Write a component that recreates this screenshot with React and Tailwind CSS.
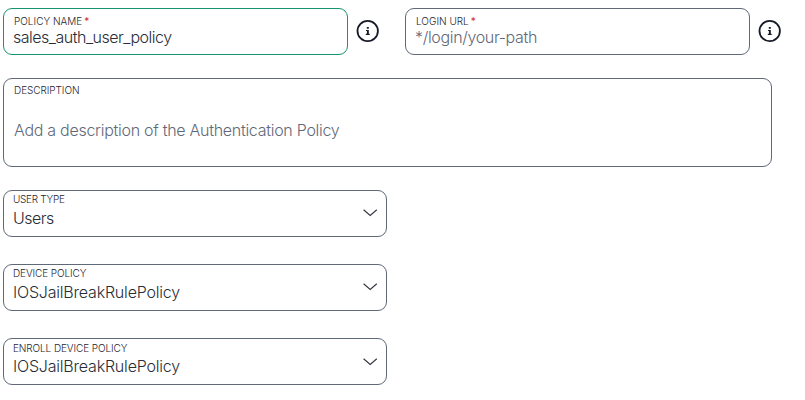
import { clsx } from 'clsx';

const InfoIcon = ({ className }) => (
    <svg className={clsx('block w-6 h-6 -mt-px shrink-0', className)} viewBox="0 0 24 24" fill="none">
        <circle cx="11.7" cy="12" r="10.2" stroke="#151a26" strokeWidth="1.8" />
        <path d="M10.8 8h2v1.7h-2zM10 10.9h2.8v3.9h.9V16H9.8v-1.2h1.1v-2.7H10z" fill="#151a26" />
    </svg>
);

const ChevronIcon = () => (
    <svg className="block w-4 h-4 shrink-0" viewBox="0 0 16 16" fill="none">
        <path d="M1.6 4.7L8.2 10.5l6.6-5.8" stroke="#343741" strokeWidth="1.15" />
    </svg>
);

const Label = ({ children, required, className }) => (
    <div className={clsx('text-[10px] leading-[12px] font-light text-[#1f242e]', className)}>
        {children}
        {required && <span className="ml-[2px] font-normal text-[#c92b3a]">*</span>}
    </div>
);

const TextField = ({ label, value, placeholder, active, valueClass, iconClass }) => (
    <div className="flex items-center gap-2">
        <div
            className={clsx(
                'w-[345px] h-[47px] border rounded-[9px] px-2.5 pt-[6px]',
                active ? 'border-[#159570]' : 'border-[#5f6978]'
            )}
        >
            <Label required>{label}</Label>
            <div className={clsx('text-base leading-5 font-light', value ? 'text-[#282d37]' : 'text-[#5f6978]', valueClass)}>
                {value || placeholder}
            </div>
        </div>
        <InfoIcon className={iconClass} />
    </div>
);

const SelectField = ({ label, value, labelClass, valueClass, iconClass = 'pt-[14px]' }) => (
    <div className="w-[384px] h-[47px] border border-[#5f6978] rounded-[9px] pl-[9px] pr-2 flex items-start justify-between">
        <div>
            <Label className={labelClass}>{label}</Label>
            <div className={clsx('text-base leading-5 font-light text-[#282d37]', valueClass)}>{value}</div>
        </div>
        <div className={iconClass}>
            <ChevronIcon />
        </div>
    </div>
);

const App = () => {
    return (
        <div className="w-[805px] h-[400px] bg-white pl-[3px] pt-2 overflow-hidden font-['Inter','Liberation_Sans',sans-serif]">
            <div className="flex gap-[25px]">
                <TextField label="POLICY NAME" value="sales_auth_user_policy" active valueClass="-ml-px tracking-[-0.5px]" />
                <TextField label="LOGIN URL" placeholder="*/login/your-path" valueClass="-ml-px tracking-[-0.34px]" iconClass="ml-[0.4px]" />
            </div>

            <div className="mt-[23px] w-[769px] h-[89px] border border-[#5f6978] rounded-[9px] px-2.5 pt-[5px]">
                <Label className="tracking-[-0.06px]">DESCRIPTION</Label>
                <div className="mt-6 text-base leading-5 font-light tracking-[-0.28px] text-[#5f6978]">
                    Add a description of the Authentication Policy
                </div>
            </div>

            <div className="mt-[23px] flex flex-col gap-[27px]">
                <SelectField
                    label="USER TYPE"
                    value="Users"
                    labelClass="mt-[2px] tracking-[-0.3px]"
                    valueClass="mt-[3px] tracking-[-0.5px]"
                />
                <SelectField
                    label="DEVICE POLICY"
                    value="IOSJailBreakRulePolicy"
                    labelClass="mt-[2px] tracking-[-0.1px]"
                    valueClass="mt-[3px] tracking-[-0.2px]"
                />
                <SelectField
                    label="ENROLL DEVICE POLICY"
                    value="IOSJailBreakRulePolicy"
                    labelClass="mt-[3px] tracking-[-0.1px]"
                    valueClass="mt-[2px] tracking-[-0.2px]"
                    iconClass="pt-[15px]"
                />
            </div>
        </div>
    );
};

export default App;
